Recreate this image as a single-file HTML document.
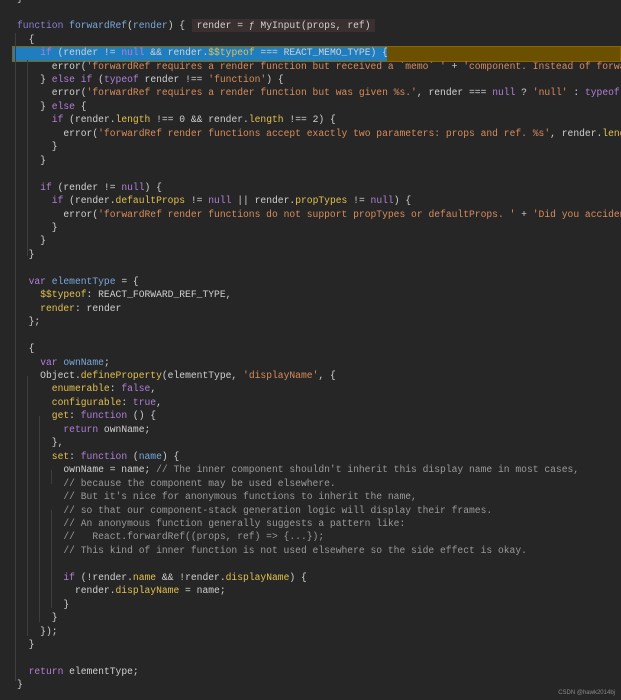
<!DOCTYPE html>
<html><head><meta charset="utf-8"><style>
html,body{margin:0;padding:0;background:#262626;width:621px;height:700px;overflow:hidden}
#code{position:absolute;left:17px;top:-7.7px;width:604px;overflow:hidden;font-family:"Liberation Mono",monospace;font-size:9.67px;line-height:13.458px;color:#d0d0d0;white-space:pre;z-index:2}
.k{color:#b07fd8}.f{color:#79a7dc}.s{color:#d98c5b}.p{color:#e3c04e}.c{color:#9a9a9a}.fn{color:#8e7dd0}
.g{position:absolute;width:1px;background:#3e3e3e;z-index:1}
#hl{position:absolute;left:12px;top:46px;width:607px;height:14px;background:#6a5000;border:1px solid #8a6400;z-index:0}
#sel{position:absolute;left:13px;top:47px;width:374px;height:14px;background:#1f7ec0;z-index:1}
#hint{position:absolute;left:192px;top:19px;width:183px;height:13px;background:#3b3030;z-index:1}
#wm{position:absolute;right:6px;bottom:4px;font-family:"Liberation Sans",sans-serif;font-size:6px;color:#8a8a8a}
</style></head><body>
<div id="hl"></div><div id="sel"></div><div id="hint"></div>
<div class="g" style="left:15px;top:33px;height:648px"></div>
<div class="g" style="left:27px;top:60px;height:196px"></div>
<div class="g" style="left:27px;top:376px;height:260px"></div>
<div class="g" style="left:39px;top:416px;height:206px"></div>
<div class="g" style="left:51px;top:470px;height:14px"></div>
<div class="g" style="left:51px;top:510px;height:98px"></div>
<div id="code">}

<span class="fn">function</span> <span class="f">forwardRef</span>(<span class="f">render</span>) {  render = ƒ MyInput(props, ref)
  {
    <span class="k">if</span> (render != <span class="k">null</span> &amp;&amp; render.<span class="p">$$typeof</span> === REACT_MEMO_TYPE) {
      error(<span class="s">'forwardRef requires a render function but received a `memo` '</span> + <span class="s">'component. Instead of forwardRef(memo(...)), use '</span>
    } <span class="k">else if</span> (<span class="k">typeof</span> render !== <span class="s">'function'</span>) {
      error(<span class="s">'forwardRef requires a render function but was given %s.'</span>, render === <span class="k">null</span> ? <span class="s">'null'</span> : <span class="k">typeof</span> render);
    } <span class="k">else</span> {
      <span class="k">if</span> (render.<span class="p">length</span> !== 0 &amp;&amp; render.<span class="p">length</span> !== 2) {
        error(<span class="s">'forwardRef render functions accept exactly two parameters: props and ref. %s'</span>, render.<span class="p">length</span> === 1 ?
      }
    }

    <span class="k">if</span> (render != <span class="k">null</span>) {
      <span class="k">if</span> (render.<span class="p">defaultProps</span> != <span class="k">null</span> || render.<span class="p">propTypes</span> != <span class="k">null</span>) {
        error(<span class="s">'forwardRef render functions do not support propTypes or defaultProps. '</span> + <span class="s">'Did you accidentally pass a React'</span>
      }
    }
  }

  <span class="k">var</span> <span class="f">elementType</span> = {
    <span class="p">$$typeof</span>: REACT_FORWARD_REF_TYPE,
    <span class="p">render</span>: render
  };

  {
    <span class="k">var</span> <span class="f">ownName</span>;
    Object.<span class="p">defineProperty</span>(elementType, <span class="s">'displayName'</span>, {
      <span class="p">enumerable</span>: <span class="k">false</span>,
      <span class="p">configurable</span>: <span class="k">true</span>,
      <span class="p">get</span>: <span class="k">function</span> () {
        <span class="k">return</span> ownName;
      },
      <span class="p">set</span>: <span class="k">function</span> (<span class="f">name</span>) {
        ownName = name; <span class="c">// The inner component shouldn't inherit this display name in most cases,</span>
        <span class="c">// because the component may be used elsewhere.</span>
        <span class="c">// But it's nice for anonymous functions to inherit the name,</span>
        <span class="c">// so that our component-stack generation logic will display their frames.</span>
        <span class="c">// An anonymous function generally suggests a pattern like:</span>
        <span class="c">//   React.forwardRef((props, ref) =&gt; {...});</span>
        <span class="c">// This kind of inner function is not used elsewhere so the side effect is okay.</span>

        <span class="k">if</span> (!render.<span class="p">name</span> &amp;&amp; !render.<span class="p">displayName</span>) {
          render.<span class="p">displayName</span> = name;
        }
      }
    });
  }

  <span class="k">return</span> elementType;
}</div>
<div id="wm">CSDN @hawk2014bj</div>
</body></html>
